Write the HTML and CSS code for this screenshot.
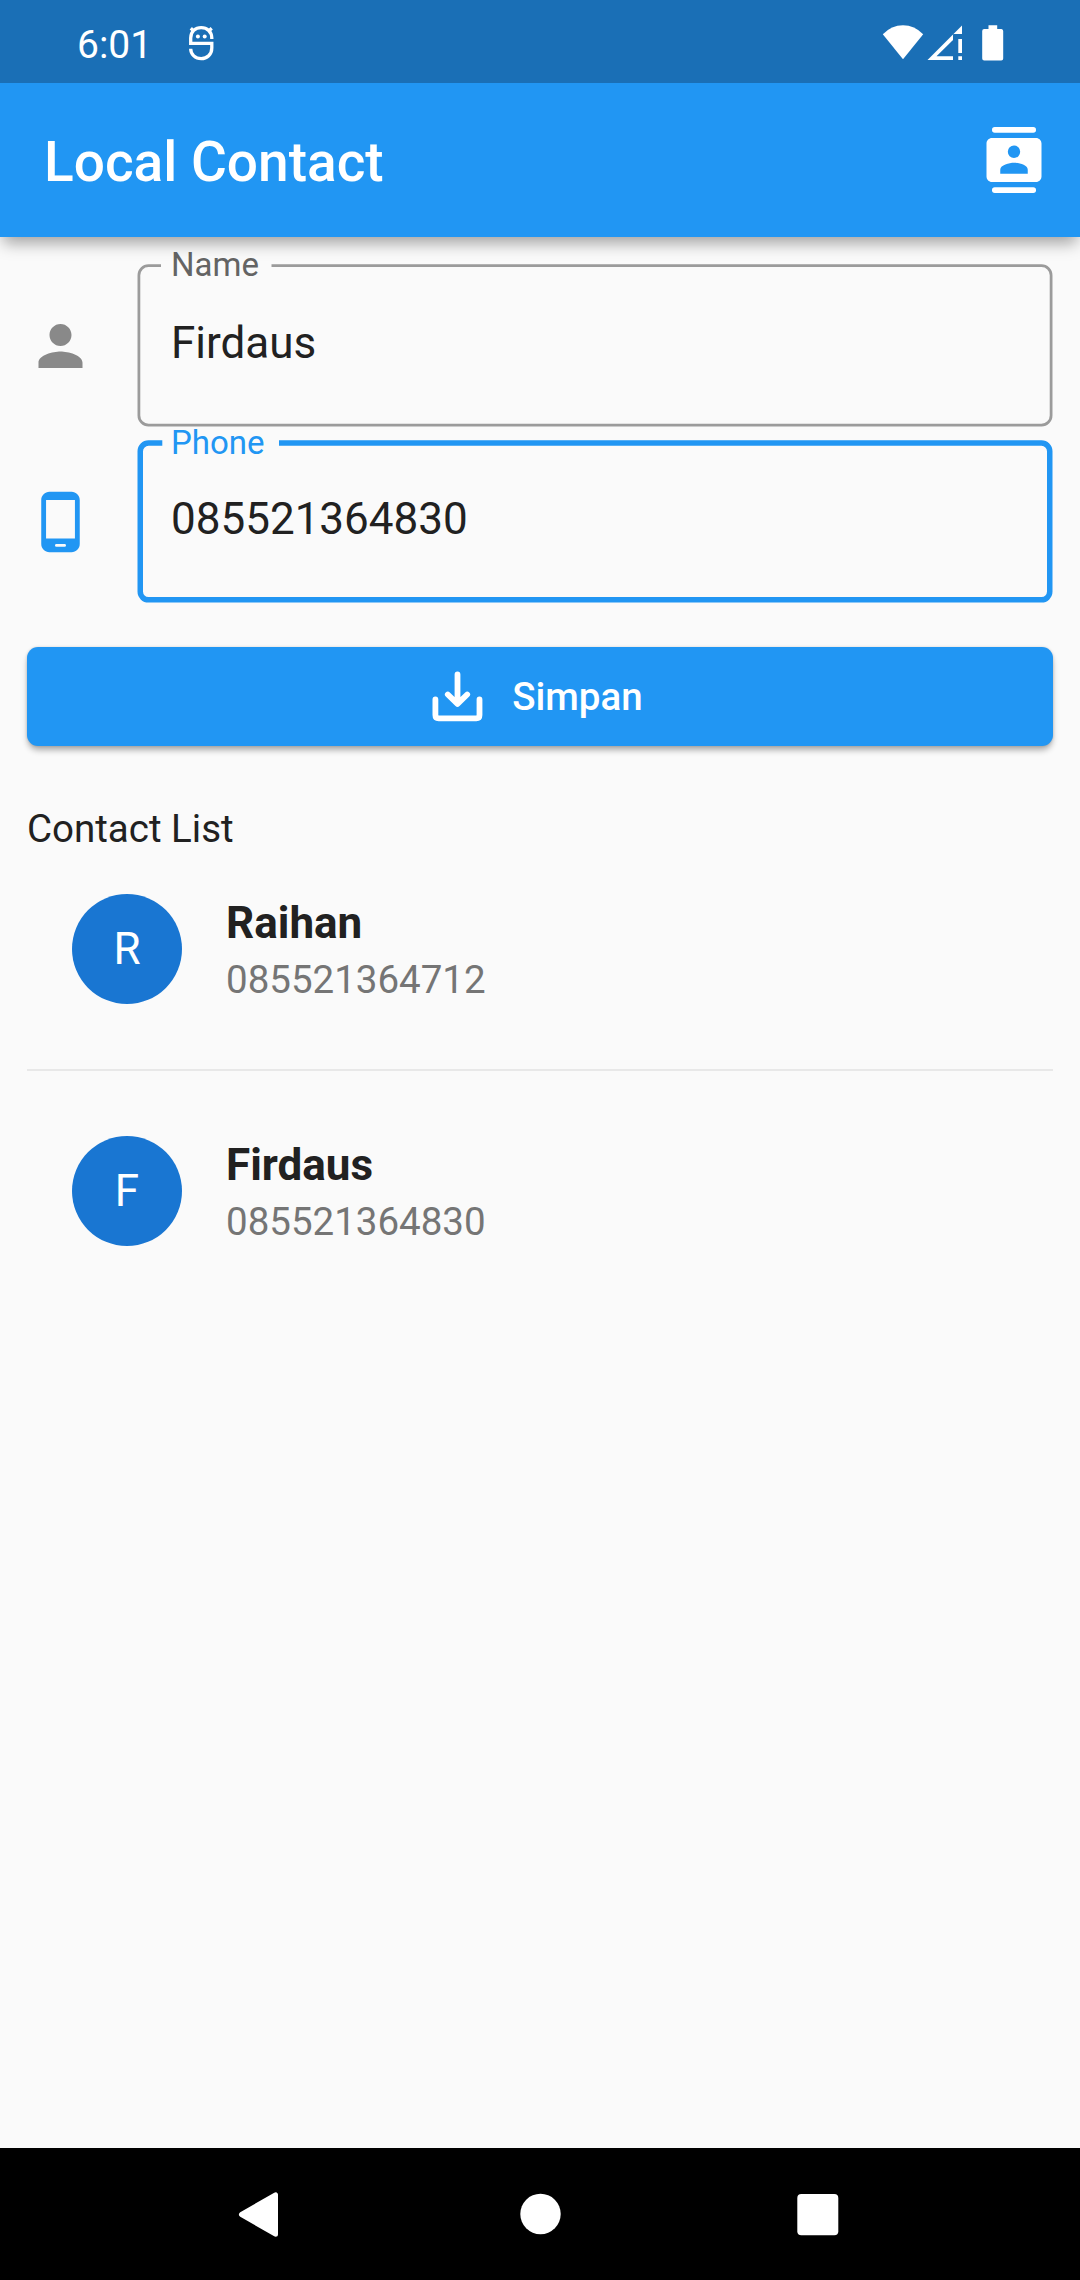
FILE: index.html
```html
<!DOCTYPE html>
<html lang="id">
<head>
<meta charset="utf-8">
<title>Local Contact</title>
<link rel="stylesheet" href="styles.css">
</head>
<body>
<div class="screen">
  <div class="status-bar">
    <div class="status-left">
      <span class="clock">6:01</span>
      <svg class="app-glyph" viewBox="0 0 28 38" width="28" height="38" fill="none" stroke="#fff" stroke-width="3.300">
        <path d="M24.800 15V14C24.800 7.500 20 3.700 14.200 3.700S3.700 7.500 3.700 14V19.300H24.800V24C24.800 30.500 20 34.700 14.200 34.700S3.700 30.500 3.700 24.700"/>
        <path d="M3.800 4.300L7 7.300M24.700 4.300L21.500 7.300"/>
        <circle cx="10.900" cy="12.500" r="2" fill="#fff" stroke="none"/>
        <circle cx="17.700" cy="12.500" r="2" fill="#fff" stroke="none"/>
      </svg>
    </div>
    <div class="status-right">
      <svg class="wifi" viewBox="0 0 42 36" width="42" height="36" fill="#fff"><path d="M.8 9.300Q9.500.3 21 .3T41.200 9.300L21 34.300z"/></svg>
      <svg class="signal" viewBox="0 0 36 36" width="36" height="36" fill="#fff"><path fill-rule="evenodd" d="M.5 35L35 .5V9h-9v26zM9.500 31.300H26V15z"/><path d="M31.300 14H35v14h-3.700zM31.300 31.300H35V35h-3.700z"/></svg>
      <svg class="battery" viewBox="0 0 22 36" width="22" height="36" fill="#fff"><path d="M6.500.3h8.700V4H19.500A2 2 0 0 1 21.200 6V33.500A2 2 0 0 1 19.200 35.500H2.200A2 2 0 0 1 .2 33.500V6A2 2 0 0 1 2.200 4H6.500z"/></svg>
    </div>
  </div>
  <header class="app-bar">
    <h1 class="title">Local Contact</h1>
    <svg class="contacts" viewBox="0 0 24 24" width="66" height="66" fill="#fff">
      <rect x="4" y="0" width="16" height="2.100" rx="1"/>
      <rect x="4" y="21.900" width="16" height="2.100" rx="1"/>
      <path fill-rule="evenodd" d="M20 4H4c-1.100 0-2 .9-2 2v12c0 1.100.9 2 2 2h16c1.100 0 2-.9 2-2V6c0-1.100-.9-2-2-2zm-8 2.750a2.250 2.250 0 1 1 0 4.500 2.250 2.250 0 0 1 0-4.500zM17 17H7v-1.500c0-1.670 3.330-2.500 5-2.500s5 .83 5 2.500z"/>
    </svg>
  </header>
  <main class="content">
    <form class="form">
      <div class="row">
        <svg class="row-icon person" viewBox="-0.180 0 24 24" width="66" height="66"><path d="M12 12c2.210 0 4-1.790 4-4s-1.790-4-4-4-4 1.790-4 4 1.790 4 4 4zm0 2c-2.670 0-8 1.340-8 4v2h16v-2c0-2.660-5.330-4-8-4z"/></svg>
        <div class="field">
          <svg class="outline" viewBox="0 0 916 163" width="916" height="163"><path d="M24 1.700H11.500A9.600 9.600 0 0 0 1.900 11.300V151.400A9.600 9.600 0 0 0 11.500 161H904.500A9.600 9.600 0 0 0 914.100 151.400V11.300A9.600 9.600 0 0 0 904.500 1.700H134.500"/></svg>
          <label class="label">Name</label>
          <span class="value">Firdaus</span>
        </div>
      </div>
      <div class="row focused">
        <svg class="row-icon" viewBox="-0.180 0 24 24" width="66" height="66"><path fill-rule="evenodd" d="M16 1H8C6.340 1 5 2.340 5 4v16c0 1.660 1.340 3 3 3h8c1.660 0 3-1.340 3-3V4c0-1.660-1.340-3-3-3zM13.500 21h-3a.5.5 0 0 1 0-1h3a.5.5 0 0 1 0 1zM17.250 18H6.750V4h10.500z"/></svg>
        <div class="field">
          <svg class="outline" viewBox="0 0 916 163" width="916" height="163"><path d="M25.300 3.050H11.500A8.250 8.250 0 0 0 3.250 11.300V151.600A8.250 8.250 0 0 0 11.500 159.850H904.500A8.250 8.250 0 0 0 912.750 151.600V11.300A8.250 8.250 0 0 0 904.500 3.050H142"/></svg>
          <label class="label">Phone</label>
          <span class="value">085521364830</span>
        </div>
      </div>
      <button class="save" type="button">
        <svg viewBox="0 0 52 52" width="52" height="52" fill="none" stroke="#fff" stroke-width="5.800" stroke-linecap="round" stroke-linejoin="round"><path d="M4.400 28.500V44Q4.400 47.300 7.700 47.300H45.300Q48.500 47.300 48.500 44V28.500M26.500 3.500V32M16.800 23.500L26.500 32.900L36.200 23.500"/></svg>
        <span>Simpan</span>
      </button>
    </form>
    <h2 class="list-title">Contact List</h2>
    <ul class="contact-list">
      <li class="contact">
        <span class="avatar">R</span>
        <div class="info"><span class="name">Raihan</span><span class="phone">085521364712</span></div>
      </li>
      <li class="contact">
        <span class="avatar">F</span>
        <div class="info"><span class="name">Firdaus</span><span class="phone">085521364830</span></div>
      </li>
    </ul>
  </main>
  <nav class="nav-bar">
    <svg viewBox="0 0 46 50" width="46" height="50"><path d="M39.500 4.800V44.200L5.500 24.500z" fill="#fff" stroke="#fff" stroke-width="5" stroke-linejoin="round"/></svg>
    <svg viewBox="0 0 46 50" width="46" height="50"><circle cx="24.500" cy="24" r="20.200" fill="#fff"/></svg>
    <svg viewBox="0 0 46 50" width="46" height="50"><rect x="2.300" y="4" width="41" height="41.300" rx="4" fill="#fff"/></svg>
  </nav>
</div>
</body>
</html>
```
FILE: styles.css
```css
* {
  box-sizing: border-box;
}

body {
  margin: 0;
  background: #fafafa;
  color: #212121;
  font-family: Roboto, "Noto Sans", sans-serif;
}

svg {
  display: block;
  flex: none;
}

.screen {
  display: flex;
  flex-direction: column;
  width: 1080px;
  height: 2280px;
}

.status-bar {
  position: relative;
  z-index: 2;
  display: flex;
  justify-content: space-between;
  height: 83px;
  padding: 0 76px 0 77px;
  background: #1a6fb6;
  color: #fff;
}

.status-left,
.status-right {
  display: flex;
  align-items: flex-start;
}

.clock {
  width: 110px;
  padding-top: 21px;
  font-size: 39px;
  line-height: 48px;
}

.app-glyph {
  margin-top: 24px;
}

.status-right {
  padding-top: 25px;
}

.signal {
  margin-left: 3px;
}

.battery {
  margin-left: 19px;
}

.app-bar {
  position: relative;
  z-index: 1;
  display: flex;
  align-items: center;
  justify-content: space-between;
  height: 154px;
  padding: 0 33px 0 44px;
  background: #2196f3;
  color: #fff;
  box-shadow: 0 9px 15px -3px rgba(0, 0, 0, 0.36);
}

.title {
  margin: 4px 0 0;
  font-size: 55px;
  font-weight: 500;
  line-height: 66px;
}

.content {
  flex: 1;
  padding: 27px 27px 0;
}

.form {
  display: flex;
  flex-direction: column;
}

.row {
  display: grid;
  grid-template-columns: 110px 916px;
  align-items: center;
  height: 163px;
  margin-bottom: 13px;
}

.row-icon {
  fill: #2196f3;
}

.person {
  fill: #898989;
}

.field {
  position: relative;
  display: flex;
  align-items: center;
  height: 163px;
  padding-left: 34px;
}

.outline {
  position: absolute;
  inset: 0;
  fill: none;
  stroke: #9b9b9b;
  stroke-width: 2.75;
}

.label {
  position: absolute;
  top: -19px;
  left: 34px;
  font-size: 33px;
  line-height: 40px;
  color: #646464;
}

.focused .outline {
  stroke: #2196f3;
  stroke-width: 5.5;
}

.focused .label {
  top: -17px;
  color: #2196f3;
}

.value {
  font-size: 44px;
  line-height: 52px;
  margin-bottom: 5px;
}

.save {
  display: flex;
  align-items: center;
  justify-content: center;
  gap: 29px;
  height: 99px;
  margin: 31px 0.5px 0 0.4px;
  padding: 0 6px 0 0;
  border: 0;
  border-radius: 11px;
  background: #2196f3;
  color: #fff;
  font: 500 38.5px/46px Roboto, "Noto Sans", sans-serif;
  box-shadow: 0 5px 6px -1px rgba(0, 0, 0, 0.32), 0 0 3px rgba(0, 0, 0, 0.15);
}

.list-title {
  margin: 59px 0 0;
  font-size: 38.5px;
  font-weight: 400;
  line-height: 48px;
}

.contact-list {
  margin: 0;
  padding: 0;
  list-style: none;
}

.contact {
  display: flex;
  gap: 44px;
  height: 240px;
  padding: 65px 0 0 45px;
}

.contact:first-child {
  height: 218px;
  padding-top: 41px;
  border-bottom: 2px solid #e8e8e8;
}

.avatar {
  width: 110px;
  height: 110px;
  border-radius: 50%;
  background: #1976d2;
  color: #fff;
  font-size: 44px;
  line-height: 110px;
  text-align: center;
}

.info {
  display: flex;
  flex-direction: column;
  padding-top: 3px;
}

.name {
  font-size: 44px;
  font-weight: 700;
  line-height: 52px;
}

.phone {
  margin-top: 5px;
  font-size: 38.5px;
  line-height: 52px;
  color: #757575;
}

.nav-bar {
  display: flex;
  justify-content: space-between;
  height: 132px;
  padding: 42px 239px 0 236px;
  background: #000;
}
```
